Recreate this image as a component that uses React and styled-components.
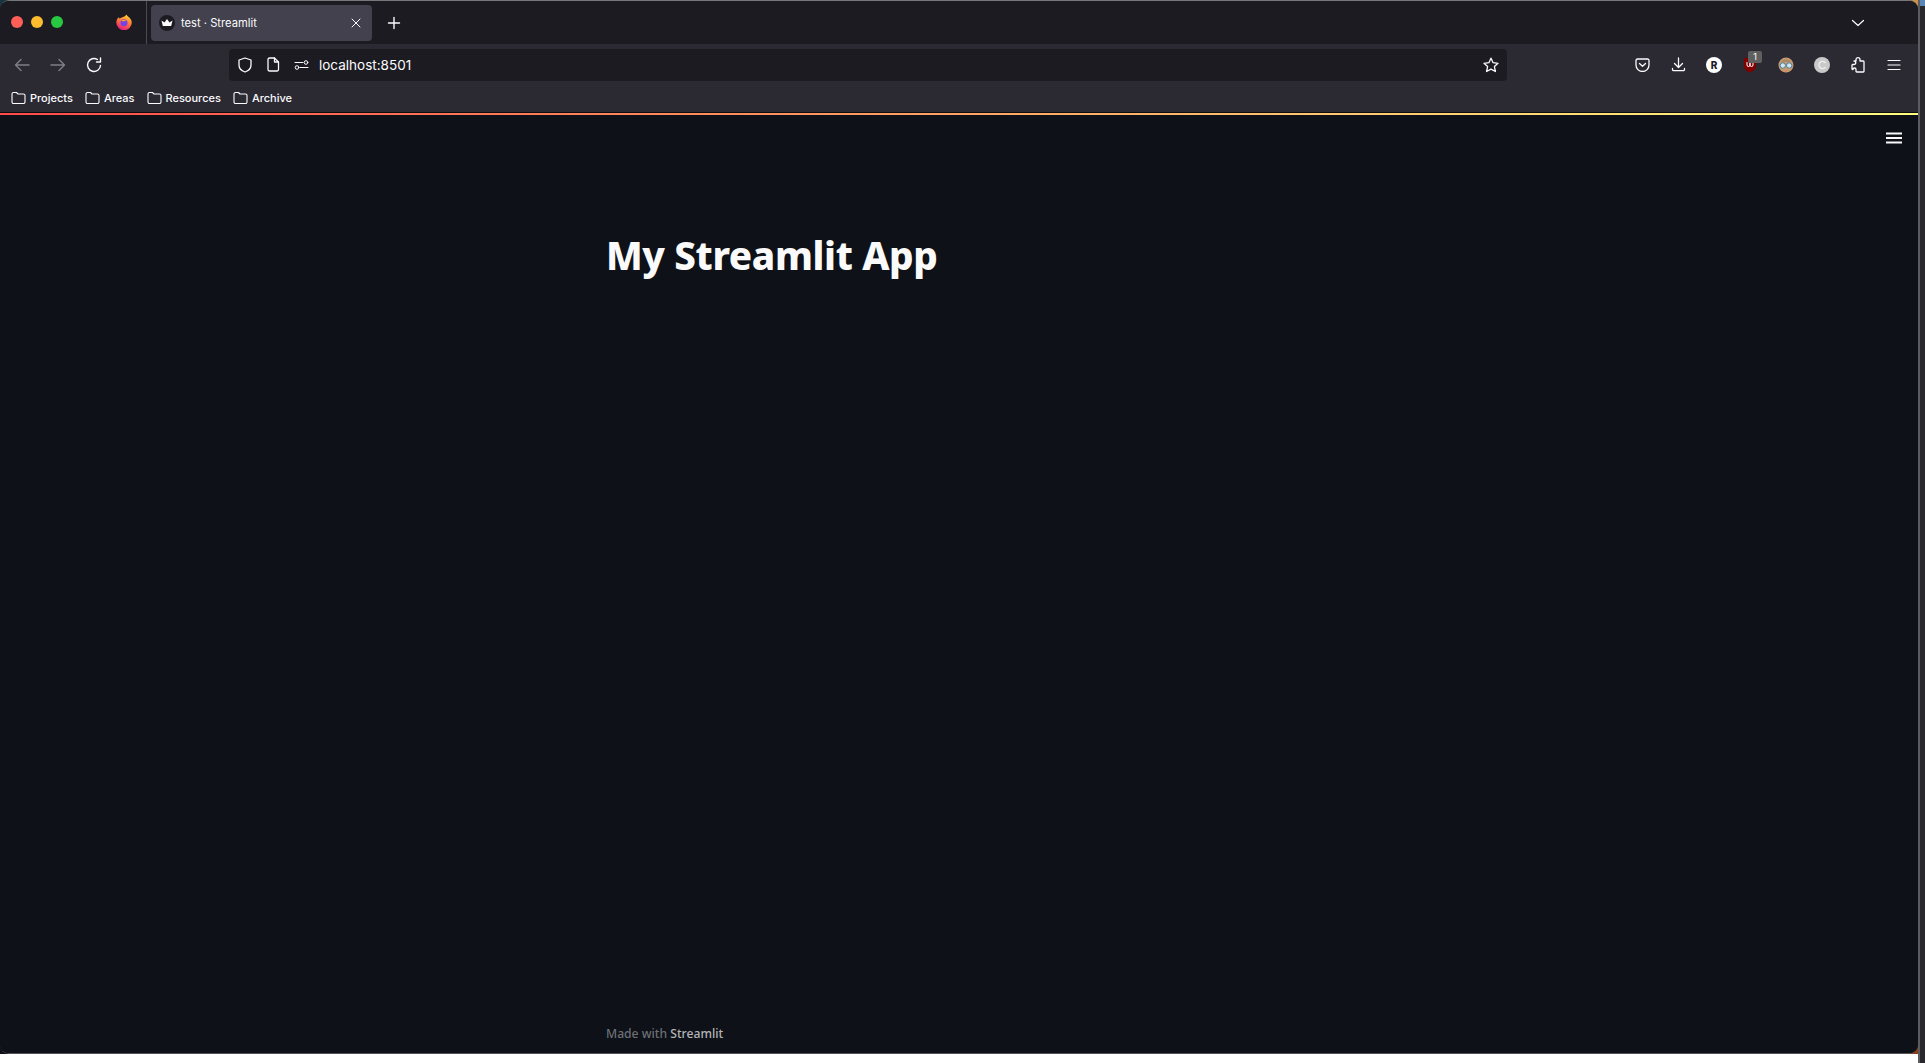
import React from "react";
import styled, { createGlobalStyle } from "styled-components";

const Global = createGlobalStyle`
  html, body { margin: 0; padding: 0; background: #fff; height: 100%; overflow: hidden; }
  #root { height: 100%; }
  * { box-sizing: border-box; }
`;

const Desktop = styled.div`
  width: 1925px;
  height: 1063px;
  display: flex;
  font-family: "Inter", "Liberation Sans", sans-serif;
`;
const WindowColumn = styled.div`
  flex: 1;
  height: 100%;
  background:
    linear-gradient(90deg, #16333f 0 50%, #c9924a 50%) top / 100% 30px no-repeat,
    linear-gradient(90deg, #0e1117 0 50%, #8a3d16 50%) 0 1035px / 100% 19px no-repeat,
    linear-gradient(#0e1117 0 1054px, #fff 1054px);
`;
const SideStrip = styled.div`
  width: 7px;
  flex: none;
  background: linear-gradient(#5b86b8 0 6px, #29282c 6px);
  border-left: 2px solid #5c5b60;
`;
const Win = styled.div`
  height: 1054px;
  display: flex;
  flex-direction: column;
  overflow: hidden;
  border-top: 1px solid #77767b;
  border-bottom: 1px solid #55545a;
  border-radius: 9px;
  background: #0e1117;
`;
const TabBar = styled.div`
  height: 43px;
  flex: none;
  display: flex;
  align-items: center;
  padding-right: 42px;
  background: #1c1b22;
  color: #fbfbfe;
`;
const Lights = styled.div`
  width: 147px;
  height: 100%;
  flex: none;
  display: flex;
  align-items: center;
  gap: 8px;
  padding: 0 0 1px 11px;
  border-right: 1px solid #4c4b52;
`;
const Light = styled.span`
  width: 12px;
  height: 12px;
  border-radius: 50%;
  background: ${p => p.$c};
`;
const FoxSlot = styled.span`
  margin-left: 45px;
  display: flex;
`;
const Tab = styled.div`
  width: 221px;
  height: 36px;
  margin-left: 4px;
  padding: 0 10px 0 8px;
  display: flex;
  align-items: center;
  background: #42414d;
  border-radius: 4px;
  font-size: 11.2px;
`;
const Favicon = styled.span`
  width: 16px;
  height: 16px;
  border-radius: 50%;
  background: #1c1b22;
  display: flex;
  align-items: center;
  justify-content: center;
  margin-right: 6px;
`;
const TabTitle = styled.span`
  flex: 1;
  white-space: nowrap;
`;
const IconBox = styled.span`
  display: inline-flex;
  align-items: center;
  justify-content: center;
  flex: none;
  width: ${p => p.$w || 36}px;
  opacity: ${p => (p.$dim ? 0.4 : 1)};
  position: relative;
`;
const Spacer = styled.div`
  flex: 1;
`;
const Toolbar = styled.div`
  height: 41px;
  flex: none;
  display: flex;
  align-items: center;
  background: #2b2a33;
  color: #fbfbfe;
  padding-left: 4px;
`;
const UrlBar = styled.div`
  width: 1278px;
  height: 32px;
  margin-left: 117px;
  border-radius: 4px;
  background: #1c1b22;
  display: flex;
  align-items: center;
  padding: 0 4px 0 2px;
  font-size: 13.5px;
`;
const UrlText = styled.span`
  flex: 1;
  margin-left: 4px;
`;
const Actions = styled.div`
  margin-left: 117px;
  display: flex;
  align-items: center;
`;
const Badge = styled.span`
  position: absolute;
  top: -6px;
  left: 16px;
  width: 14px;
  height: 12px;
  border-radius: 2px;
  background: #5f5f5f;
  color: #fff;
  font-size: 9px;
  line-height: 12px;
  text-align: center;
`;
const Bookmarks = styled.div`
  height: 27px;
  flex: none;
  display: flex;
  align-items: center;
  gap: 12px;
  padding: 0 0 1px 11px;
  background: #2b2a33;
  color: #fbfbfe;
  font-size: 11px;
  font-weight: 500;
`;
const Bookmark = styled.span`
  display: flex;
  align-items: center;
  gap: 4px;
`;
const Rainbow = styled.div`
  height: 3px;
  flex: none;
  border-top: 1px solid #0d0d10;
  background: linear-gradient(90deg, #ff4b4b, #fffd80);
`;
const Main = styled.div`
  flex: 1;
  position: relative;
  display: flex;
  flex-direction: column;
  align-items: flex-start;
  padding: 116px 0 0 606px;
  background: #0e1117;
`;
const MenuButton = styled.div`
  position: absolute;
  top: 17px;
  right: 15px;
  display: flex;
`;
const Title = styled.h1`
  margin: 0;
  color: #fafafa;
  font-family: "Noto Sans", sans-serif;
  font-size: 38.5px;
  line-height: 48px;
  font-weight: 800;
  letter-spacing: -0.37px;
`;
const Footer = styled.div`
  margin-top: auto;
  margin-bottom: 11px;
  font-family: "Noto Sans", sans-serif;
  font-size: 12.15px;
  font-weight: 500;
  color: #6c6f76;
`;
const FooterStrong = styled.span`
  color: #b4b5b8;
`;

const S = { fill: "none", stroke: "currentColor", strokeWidth: 1.4, strokeLinecap: "round", strokeLinejoin: "round" };

const Folder = () => (
  <svg width="15" height="14" viewBox="0 0 15 14" {...S} strokeWidth="1.1">
    <path d="M1 3a1.5 1.5 0 0 1 1.5-1.5h3l1.5 1.5h5.5A1.5 1.5 0 0 1 14 4.500v6.500a1.500 1.500 0 0 1-1.500 1.500h-10A1.500 1.500 0 0 1 1 11z" />
  </svg>
);
const Fox = () => (
  <svg width="16" height="16" viewBox="0 0 16 16">
    <defs>
      <linearGradient id="fx" x1="0.7" y1="0" x2="0.3" y2="1">
        <stop offset="0" stopColor="#ffd52e" />
        <stop offset="0.5" stopColor="#ff7139" />
        <stop offset="1" stopColor="#e31587" />
      </linearGradient>
    </defs>
    <path d="M10.500 0.500C11 2.500 15.800 4 15.800 8.500A7.700 7.700 0 0 1 0.300 8.500C0.300 6 1.500 4 3 3.200C3 4 3.500 4.400 4 4.600C5 3 8.500 3.500 10.500 0.500Z" fill="url(#fx)" />
    <circle cx="8" cy="8.700" r="3.500" fill="#7542e5" />
    <path d="M5 6.500C7 5 10 5.500 11 7.500C9.500 6.800 8.500 7 7.500 7.500Z" fill="#ff9a2e" />
  </svg>
);

export default function App() {
  return (
    <Desktop>
      <Global />
      <WindowColumn>
        <Win>
          <TabBar>
            <Lights>
              <Light $c="#ff5f57" />
              <Light $c="#febc2e" />
              <Light $c="#28c840" />
              <FoxSlot><Fox /></FoxSlot>
            </Lights>
            <Tab>
              <Favicon>
                <svg width="12" height="10" viewBox="0 0 12 10"><path d="M0.500 2.500L3.500 4.500L6 1L8.500 4.500L11.500 2.500L10.200 8H1.800Z" fill="#fbfbfe" /></svg>
              </Favicon>
              <TabTitle>test · Streamlit</TabTitle>
              <svg width="12" height="12" viewBox="0 0 12 12" {...S} strokeWidth="1"><path d="M2 2l8 8M10 2l-8 8" /></svg>
            </Tab>
            <IconBox $w={44}>
              <svg width="14" height="14" viewBox="0 0 14 14" {...S}><path d="M7 1.500v11M1.500 7h11" /></svg>
            </IconBox>
            <Spacer />
            <IconBox $w={36}>
              <svg width="14" height="14" viewBox="0 0 14 14" {...S} strokeWidth="1.2"><path d="M1.500 4.500L7 9.500l5.500-5" /></svg>
            </IconBox>
          </TabBar>
          <Toolbar>
            <IconBox $w={36} $dim>
              <svg width="16" height="16" viewBox="0 0 16 16" {...S}><path d="M15 8H1.500M7 2.500L1.500 8 7 13.500" /></svg>
            </IconBox>
            <IconBox $w={36} $dim>
              <svg width="16" height="16" viewBox="0 0 16 16" {...S}><path d="M1 8h13.500M9 2.500L14.500 8 9 13.500" /></svg>
            </IconBox>
            <IconBox $w={36}>
              <svg width="16" height="16" viewBox="0 0 16 16" {...S}><path d="M14.500 8.500A6.500 6.500 0 1 1 11.500 2.500M14.500 1v4h-4" /></svg>
            </IconBox>
            <UrlBar>
              <IconBox $w={28}>
                <svg width="16" height="16" viewBox="0 0 16 16" {...S} strokeWidth="1.3"><path d="M8 1L14 3V8C14 11.500 11 14 8 15C5 14 2 11.500 2 8V3Z" /></svg>
              </IconBox>
              <IconBox $w={28}>
                <svg width="14" height="15" viewBox="0 0 14 15" {...S} strokeWidth="1.3"><path d="M2 2.500A1.500 1.500 0 0 1 3.500 1H8.500L12.500 5V12.500A1.500 1.500 0 0 1 11 14H3.500A1.500 1.500 0 0 1 2 12.500Z" /><path d="M8.500 1V5H12.500" /></svg>
              </IconBox>
              <IconBox $w={28}>
                <svg width="15" height="12" viewBox="0 0 15 12" {...S} strokeWidth="1"><path d="M1 3.500h8M6 8.500h8" /><circle cx="12" cy="3.500" r="1.800" /><circle cx="3" cy="8.500" r="1.800" /></svg>
              </IconBox>
              <UrlText>localhost:8501</UrlText>
              <IconBox $w={24}>
                <svg width="16" height="16" viewBox="0 0 16 16" {...S} strokeWidth="1.3"><path d="M8 1.200l2.100 4.500 4.900.6-3.600 3.300 1 4.900L8 12.100l-4.400 2.400 1-4.900L1 6.300l4.900-.6z" /></svg>
              </IconBox>
            </UrlBar>
            <Actions>
              <IconBox $w={36}>
                <svg width="15" height="14" viewBox="0 0 15 14" {...S} strokeWidth="1.3"><path d="M1 2.500A1.500 1.500 0 0 1 2.500 1h10A1.500 1.500 0 0 1 14 2.500V7A6.500 6.500 0 0 1 1 7Z" /><path d="M4.500 5.500L7.500 8.300l3-2.800" /></svg>
              </IconBox>
              <IconBox $w={36}>
                <svg width="15" height="15" viewBox="0 0 15 15" {...S} strokeWidth="1.3"><path d="M7.500 1v9M3.500 6.500l4 4 4-4M1.500 11.500v1a1.200 1.200 0 0 0 1.200 1.200h9.600a1.200 1.200 0 0 0 1.200-1.200v-1" /></svg>
              </IconBox>
              <IconBox $w={36}>
                <svg width="16" height="16" viewBox="0 0 16 16"><circle cx="8" cy="8" r="8" fill="#fff" /><text x="8" y="11.500" textAnchor="middle" fontSize="10" fontWeight="800" fill="#1c1b22" fontFamily="Inter">R</text></svg>
              </IconBox>
              <IconBox $w={36}>
                <svg width="14" height="16" viewBox="0 0 14 16"><path d="M1 1H13V9C13 12 10 14.500 7 15.500C4 14.500 1 12 1 9Z" fill="#800000" /><path d="M4 5v3a1.500 1.500 0 0 0 3 0V5v3a1.500 1.500 0 0 0 3 0V5" fill="none" stroke="#fff" strokeWidth="1" /></svg>
                <Badge>1</Badge>
              </IconBox>
              <IconBox $w={36}>
                <svg width="16" height="16" viewBox="0 0 16 16"><circle cx="8" cy="8" r="7.500" fill="#c89a70" /><path d="M3 5a6 6 0 0 1 10 0z" fill="#a98a66" /><circle cx="4.800" cy="8.500" r="2.700" fill="#cfe4ec" stroke="#4d7f95" /><circle cx="11.200" cy="8.500" r="2.700" fill="#cfe4ec" stroke="#4d7f95" /><path d="M5.500 13h5L8 15.500z" fill="#d98a60" /></svg>
              </IconBox>
              <IconBox $w={36}>
                <svg width="16" height="16" viewBox="0 0 16 16"><circle cx="8" cy="8" r="8" fill="#c9c9c9" /><path d="M11 5.500A3.500 3.500 0 1 0 11 10.500" fill="none" stroke="#eee" strokeWidth="1.500" strokeLinecap="round" /></svg>
              </IconBox>
              <IconBox $w={36}>
                <svg width="14" height="16" viewBox="0 0 14 16" {...S} strokeWidth="1.3"><path d="M5 4V2.700a2 2 0 0 1 4 0V4h3.300a.7.700 0 0 1 .7.700V14.300a.7.700 0 0 1-.7.700H5.700a.7.700 0 0 1-.7-.700V12.500a1.500 1.500 0 0 0-3 0H1.700a.7.700 0 0 1-.7-.700V8.200a.7.700 0 0 1 .7-.700H3a1.700 1.700 0 0 0 0-3.500H5" /></svg>
              </IconBox>
              <IconBox $w={36}>
                <svg width="14" height="12" viewBox="0 0 14 12" {...S} strokeWidth="1.2"><path d="M1 1.500h12M1 6h12M1 10.500h12" /></svg>
              </IconBox>
            </Actions>
          </Toolbar>
          <Bookmarks>
            <Bookmark><Folder />Projects</Bookmark>
            <Bookmark><Folder />Areas</Bookmark>
            <Bookmark><Folder />Resources</Bookmark>
            <Bookmark><Folder />Archive</Bookmark>
          </Bookmarks>
          <Rainbow />
          <Main>
            <MenuButton>
              <svg width="18" height="12" viewBox="0 0 18 12" fill="none" stroke="#fafafa" strokeWidth="2"><path d="M1 1.500h16M1 6h16M1 10.500h16" /></svg>
            </MenuButton>
            <Title>My Streamlit App</Title>
            <Footer>Made with <FooterStrong>Streamlit</FooterStrong></Footer>
          </Main>
        </Win>
      </WindowColumn>
      <SideStrip />
    </Desktop>
  );
}
